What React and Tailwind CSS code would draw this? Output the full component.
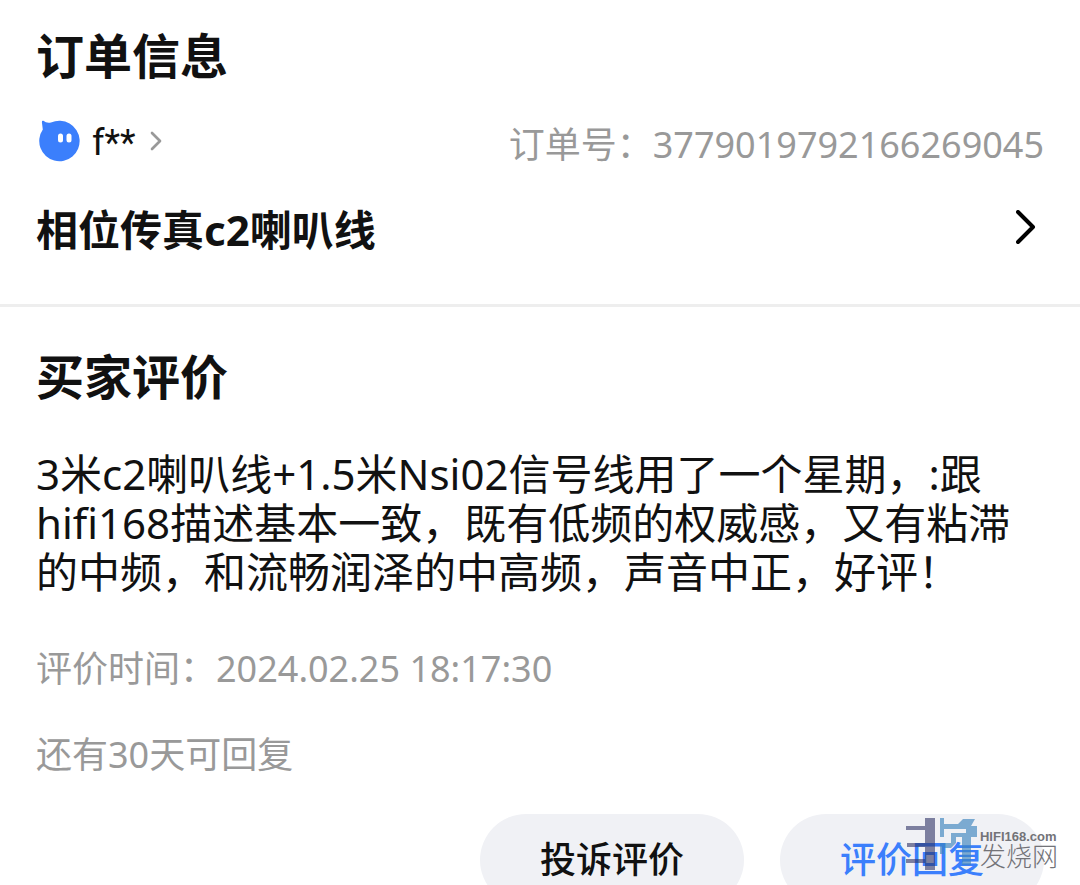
import { ChevronRight } from 'lucide-react';

const order = {
  buyer: 'f**',
  number: '3779019792166269045',
  product: '相位传真c2喇叭线',
};

const review = {
  text: '3米c2喇叭线+1.5米Nsi02信号线用了一个星期，:跟hifi168描述基本一致，既有低频的权威感，又有粘滞的中频，和流畅润泽的中高频，声音中正，好评！',
  time: '2024.02.25 18:17:30',
  daysLeft: 30,
};

const BuyerAvatar = () => (
  <svg viewBox="0 0 44 42" className="h-[42px] w-11" aria-hidden="true">
    <path
      d="M6.4 .8 Q4.8 .2 4.9 2.2 L5.8 9.5 A20.2 20.2 0 1 0 14 2.6 Q9.4 3.6 6.4 .8 Z"
      fill="#3b7ffc"
      transform="translate(1 0)"
    />
    <rect x="22" y="13.5" width="5" height="9" rx="2.5" fill="#fff" />
    <rect x="30.5" y="13.5" width="5" height="9" rx="2.5" fill="#fff" />
  </svg>
);

const Watermark = () => (
  <div className="pointer-events-none absolute top-1 right-[22px] flex items-start gap-0.5">
    <svg viewBox="0 0 74 54" className="h-[54px] w-[74px]" aria-hidden="true">
      <path
        d="M21 0H31V52H21V45H2V41H21V29H3V25H21V12H2V8H21Z"
        fill="#2f3466"
        opacity=".6"
      />
      <path
        d="M36 0H40V6H54L59 1H71L67 8H73V19H67V47H58V19H52V25L47 30H40V36H36V25H47V15H62V11H40V19H36Z"
        fill="#3c84bd"
        opacity=".65"
      />
    </svg>
    <div className="pt-3 text-[#737378]">
      <div className="font-['Liberation_Sans',sans-serif] text-[13px] leading-[14px] font-bold">HIFI168.com</div>
      <div className="text-[26px] leading-6 font-light">发烧网</div>
    </div>
  </div>
);

const App = () => {
  return (
    <main className="bg-white font-['Noto_Sans','Noto_Sans_CJK_SC',sans-serif] text-[#111]">
      <section className="border-b-[3px] border-[#eee] px-9 pt-6 pb-[46px]">
        <h2 className="text-[48px] leading-16 font-bold">订单信息</h2>

        <div className="mt-7 flex items-start justify-between">
          <button className="flex items-center">
            <BuyerAvatar />
            <span className="ml-3 pt-1 font-[Roboto,sans-serif] text-[36px] leading-[46px]">{order.buyer}</span>
            <ChevronRight className="ml-1 text-[#999]" size={32} />
          </button>
          <p className="pt-1 text-[36px] leading-[50px] text-[#999]">订单号：{order.number}</p>
        </div>

        <a href="#product" className="mt-7 flex items-center justify-between">
          <span className="pt-1 text-[42px] leading-14 font-bold">{order.product}</span>
          <svg
            viewBox="0 0 20 36"
            className="mr-2 h-9 w-5"
            fill="none"
            stroke="#000"
            strokeWidth="4"
            strokeLinecap="round"
            strokeLinejoin="round"
            aria-hidden="true"
          >
            <path d="M2 2L17 17L2 32" />
          </svg>
        </a>
      </section>

      <section className="px-9 pt-[38px]">
        <h2 className="text-[48px] leading-16 font-bold">买家评价</h2>
        <p className="mt-10 text-[42px] leading-[49px]">{review.text}</p>
        <p className="mt-12 text-[36px] leading-[50px] text-[#999]">评价时间：{review.time}</p>
        <p className="mt-9 text-[36px] leading-[50px] text-[#999]">还有{review.daysLeft}天可回复</p>
      </section>

      <footer className="relative mt-[34px] flex justify-end gap-9 px-9">
        <button className="h-[92px] w-[264px] rounded-full bg-[#f0f1f5] text-[36px] font-medium">投诉评价</button>
        <button className="h-[92px] w-[264px] rounded-full bg-[#f0f1f5] text-[36px] font-medium text-[#3b7ffc]">
          评价回复
        </button>
        <Watermark />
      </footer>
    </main>
  );
};

export default App;
